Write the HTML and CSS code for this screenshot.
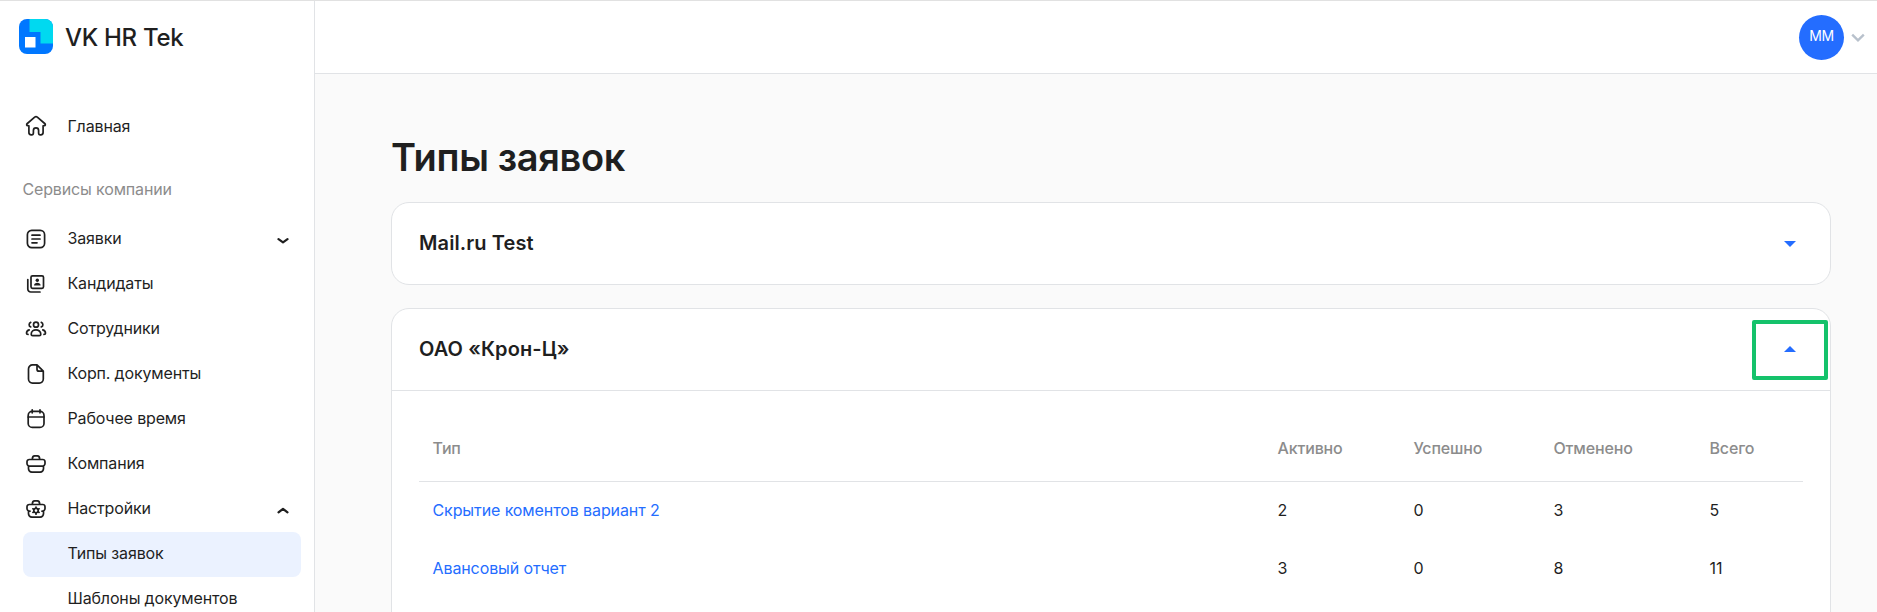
FILE: index.html
```html
<!DOCTYPE html>
<html lang="ru">
<head>
<meta charset="utf-8">
<title>VK HR Tek</title>
<link rel="stylesheet" href="styles.css">
</head>
<body>
<div class="app">
  <aside class="sidebar">
    <div class="brand">
      <svg class="brand-mark" viewBox="0 0 34 35">
        <defs><clipPath id="mark"><rect width="34" height="35" rx="8"/></clipPath></defs>
        <g clip-path="url(#mark)">
          <rect width="34" height="35" fill="#0077ff"/>
          <path d="M10.5 0H34v24.500H21.500V13H10.500z" fill="#00d9f0"/>
          <rect x="6" y="18" width="10.500" height="10.500" fill="#fff"/>
        </g>
      </svg>
      <span class="brand-name">VK HR Tek</span>
    </div>
    <nav class="nav">
      <a class="nav-item home">
        <svg class="icon" viewBox="0 0 24 24"><path d="M10.700 3.200a2 2 0 0 1 2.600 0l7.400 6.300c1.100 1 .7 2.100-.5 2.200l-1.100.1v6.700a2.300 2.300 0 0 1-2.300 2.300h-.5a1.700 1.700 0 0 1-1.700-1.700v-2.600a2.600 2.600 0 0 0-5.200 0v2.600a1.700 1.700 0 0 1-1.700 1.700h-.5a2.300 2.300 0 0 1-2.300-2.300v-6.700l-1.100-.1c-1.200-.1-1.600-1.200-.5-2.200z"/></svg>
        <span>Главная</span>
      </a>
      <div class="nav-title">Сервисы компании</div>
      <a class="nav-item">
        <svg class="icon" viewBox="0 0 24 24"><rect x="3.400" y="3.400" width="17.200" height="17.200" rx="4.300"/><path d="M8 8.200h8M8 12h8M8 15.800h5"/></svg>
        <span>Заявки</span>
        <svg class="chevron" viewBox="0 0 12 8"><path d="M1.500 2.200 6 5.300l4.500-3.100"/></svg>
      </a>
      <a class="nav-item">
        <svg class="icon" viewBox="0 0 24 24"><rect x="7" y="3.800" width="12.500" height="12.500" rx="1.500"/><path d="M3.800 7.500v9.500a3 3 0 0 0 3 3H16"/><circle class="solid" cx="13.300" cy="8.300" r="1.700"/><path class="solid" d="M10 13.500c0-3.800 6.600-3.800 6.600 0z"/></svg>
        <span>Кандидаты</span>
      </a>
      <a class="nav-item">
        <svg class="icon" viewBox="0 0 24 24"><circle cx="12" cy="7.700" r="2.500"/><path d="M7.200 17.200c0-5.700 9.600-5.700 9.600 0q0 1.400-1.500 1.400H8.700q-1.500 0-1.500-1.400zM6.700 5.400a2.400 2.400 0 0 0 0 4.500M17.300 5.400a2.400 2.400 0 0 1 0 4.500M5.200 12.900c-2 .5-2.700 2-2.700 3.400q0 1.100 1.500 1.100M18.800 12.900c2 .5 2.700 2 2.700 3.400q0 1.100-1.500 1.100"/></svg>
        <span>Сотрудники</span>
      </a>
      <a class="nav-item">
        <svg class="icon" viewBox="0 0 24 24"><path d="M13 2.900H8.500a4 4 0 0 0-4 4v10.200a4 4 0 0 0 4 4h6.800a4 4 0 0 0 4-4V9.200zM13 3v4.200a2 2 0 0 0 2 2h4.200"/></svg>
        <span>Корп. документы</span>
      </a>
      <a class="nav-item">
        <svg class="icon" viewBox="0 0 24 24"><rect x="4.200" y="4.400" width="15.800" height="16" rx="4"/><path d="M4.200 10H20M8.200 2.800v3M16 2.800v3"/></svg>
        <span>Рабочее время</span>
      </a>
      <a class="nav-item">
        <svg class="icon" viewBox="0 0 24 24"><path d="M5.200 7.500h13.600a2.200 2.200 0 0 1 2.200 2.200v1.800a2.700 2.700 0 0 1-2.700 2.700H5.700A2.700 2.700 0 0 1 3 11.500V9.700a2.200 2.200 0 0 1 2.200-2.200zM8.300 7.300c0-2.400.9-3.400 2.300-3.400h2.800c1.400 0 2.300 1 2.300 3.400M4.500 14.200v2.600a3.300 3.300 0 0 0 3.300 3.300h8.400a3.300 3.300 0 0 0 3.300-3.300v-2.600"/></svg>
        <span>Компания</span>
      </a>
      <a class="nav-item">
        <svg class="icon" viewBox="0 0 24 24"><path d="M6 14.200h-.3A2.700 2.700 0 0 1 3 11.500V9.700a2.200 2.200 0 0 1 2.200-2.200h13.600A2.200 2.200 0 0 1 21 9.700v1.800a2.700 2.700 0 0 1-2.700 2.700H18M8.300 7.300c0-2.400.9-3.400 2.300-3.400h2.800c1.400 0 2.300 1 2.300 3.400M4.500 14.200v2.600a3.300 3.300 0 0 0 3.300 3.300h8.400a3.300 3.300 0 0 0 3.300-3.300v-2.600"/><circle cx="12" cy="13.600" r="2.200"/><path d="M12 10v1.200M12 16v1.200M8.900 11.800l1 .6M14.100 14.800l1 .6M8.900 15.400l1-.6M14.100 12.400l1-.6"/></svg>
        <span>Настройки</span>
        <svg class="chevron" viewBox="0 0 12 8"><path d="M1.500 5.400 6 1.800l4.500 3.600"/></svg>
      </a>
      <a class="nav-item nav-sub active"><span>Типы заявок</span></a>
      <a class="nav-item nav-sub"><span>Шаблоны документов</span></a>
    </nav>
  </aside>
  <div class="page">
    <header class="topbar">
      <div class="avatar">ММ</div>
      <svg class="user-chevron" viewBox="0 0 14 10"><path d="M1.200 1.700 7 7.300l5.800-5.600"/></svg>
    </header>
    <main class="content">
      <h1 class="title">Типы заявок</h1>
      <section class="card">
        <div class="card-head">
          <h2 class="card-name">Mail.ru Test</h2>
          <button class="toggle"><svg class="caret" viewBox="0 0 12 6"><path d="M0 0h12L6 6z"/></svg></button>
        </div>
      </section>
      <section class="card open">
        <div class="card-head">
          <h2 class="card-name">ОАО «Крон-Ц»</h2>
          <button class="toggle marked"><svg class="caret" viewBox="0 0 12 6"><path d="M0 6h12L6 0z"/></svg></button>
        </div>
        <div class="table">
          <div class="row head"><span>Тип</span><span>Активно</span><span>Успешно</span><span>Отменено</span><span>Всего</span></div>
          <div class="row"><a class="link">Скрытие коментов вариант 2</a><span>2</span><span>0</span><span>3</span><span>5</span></div>
          <div class="row"><a class="link">Авансовый отчет</a><span>3</span><span>0</span><span>8</span><span>11</span></div>
        </div>
      </section>
    </main>
  </div>
</div>
</body>
</html>
```
FILE: styles.css
```css
* { box-sizing: border-box; }
body {
  margin: 0;
  height: 612px;
  overflow: hidden;
  font: 400 16px/24px Inter, sans-serif;
  color: #1f1f1f;
  background: #fafafa;
}
.app {
  display: flex;
  height: 612px;
  overflow: hidden;
  border-top: 1px solid #e1e1e1;
}
.sidebar {
  flex: none;
  width: 315px;
  background: #fff;
  border-right: 1px solid #e1e3e6;
}
.brand {
  display: flex;
  align-items: center;
  height: 72px;
  padding-left: 19px;
}
.brand-mark { width: 34px; height: 35px; margin-top: -1px; }
.brand-name {
  margin: 1px 0 0 12px;
  font-size: 24px;
  font-weight: 500;
  letter-spacing: -0.3px;
  white-space: nowrap;
}
.nav {
  padding: 31px 13px 0 23px;
  letter-spacing: -0.15px;
}
.nav-item {
  display: flex;
  align-items: center;
  height: 45px;
  padding-right: 12px;
  border-radius: 8px;
  white-space: nowrap;
}
.nav-item span { padding-bottom: 3px; }
.home span { padding-bottom: 1px; }
.icon {
  flex: none;
  width: 24px;
  height: 24px;
  margin: -1px 19.5px 0 1px;
  fill: none;
  stroke: #1f1f1f;
  stroke-width: 1.7;
  stroke-linecap: round;
  stroke-linejoin: round;
}
.icon .solid { fill: #1f1f1f; stroke: none; }
.chevron {
  width: 12px;
  height: 8px;
  margin: 2px 0 0 auto;
  fill: none;
  stroke: #1f1f1f;
  stroke-width: 2.2;
  stroke-linecap: round;
  stroke-linejoin: round;
}
.nav-title {
  height: 68px;
  margin-left: -0.5px;
  padding-top: 28px;
  color: #8c8c8c;
}
.nav-sub { padding-left: 44.5px; }
.active { background: #ebf2ff; }
.page { flex: 1; min-width: 0; }
.topbar {
  display: flex;
  align-items: center;
  justify-content: flex-end;
  height: 73px;
  padding-right: 12px;
  background: #fff;
  border-bottom: 1px solid #e1e3e6;
}
.avatar {
  width: 45px;
  height: 45px;
  border-radius: 50%;
  background: #246dff;
  color: #fff;
  font-size: 14px;
  letter-spacing: -0.4px;
  line-height: 42px;
  text-align: center;
}
.user-chevron {
  width: 14px;
  height: 10px;
  margin: 2px 0 0 7px;
  fill: none;
  stroke: #b8c1cc;
  stroke-width: 2.4;
}
.content { padding: 59px 46px 0 76px; }
.title {
  margin: 0 0 21px;
  font-size: 38px;
  font-weight: 600;
  letter-spacing: -0.35px;
  line-height: 48px;
}
.card {
  margin-bottom: 23px;
  background: #fff;
  border: 1px solid #e1e3e6;
  border-radius: 18px;
}
.open { height: 420px; }
.card-head {
  display: flex;
  align-items: center;
  justify-content: space-between;
  height: 81px;
  padding: 0 2px 0 27px;
}
.open .card-head {
  height: 82px;
  border-bottom: 1px solid #e1e3e6;
}
.card-name {
  margin: 0;
  padding-bottom: 2px;
  font-size: 20px;
  font-weight: 600;
  letter-spacing: 0.1px;
  line-height: 28px;
}
.toggle {
  display: flex;
  align-items: center;
  justify-content: center;
  width: 76px;
  height: 60px;
  padding: 0;
  border: 4px solid transparent;
  border-radius: 2px;
  background: none;
}
.marked {
  margin-top: 1px;
  padding-bottom: 2px;
  border-color: #15c26b;
}
.caret { width: 12px; height: 6px; fill: #246dff; }
.table { padding: 34px 27px 0; }
.row {
  display: grid;
  grid-template-columns: 845px 136px 140px 156px 1fr;
  align-items: center;
  height: 58px;
  padding: 0 0 2px 13.500px;
}
.head {
  height: 57px;
  padding-bottom: 10px;
  border-bottom: 1px solid #e1e3e6;
  color: #8c8c8c;
  font-weight: 500;
  letter-spacing: -0.15px;
}
.link {
  color: #246dff;
  letter-spacing: -0.1px;
}
```
